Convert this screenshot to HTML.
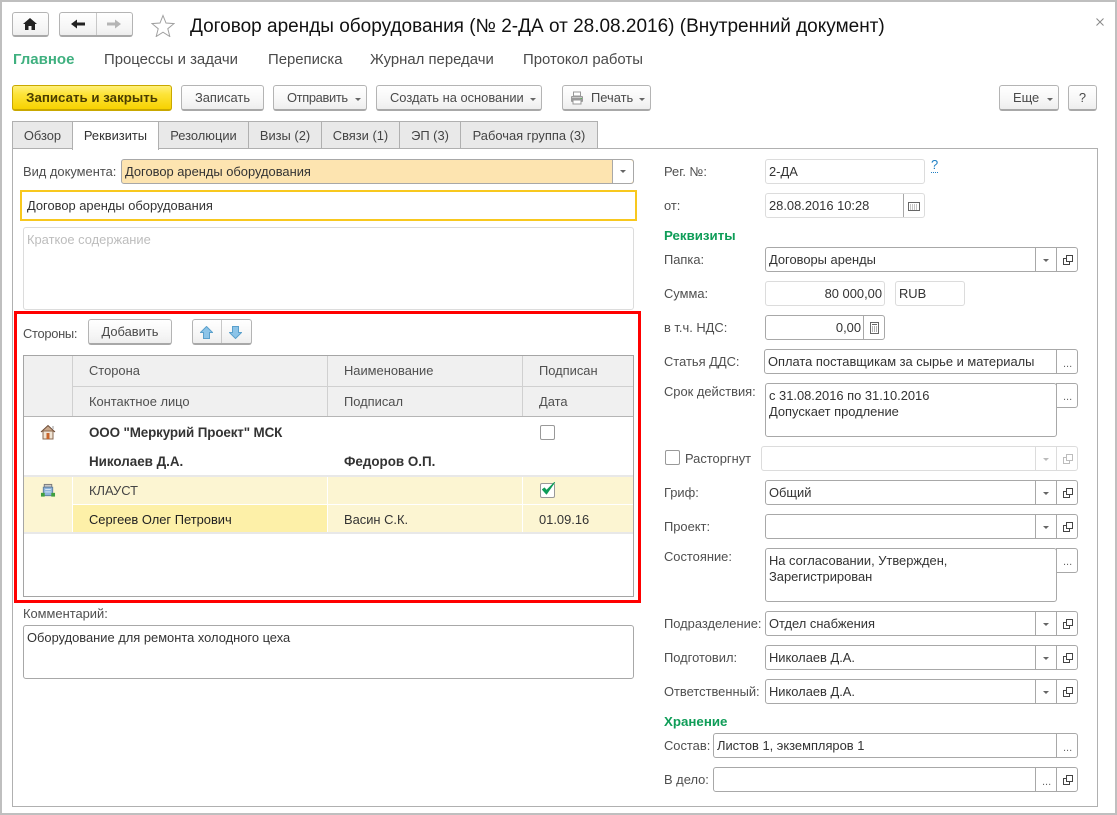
<!DOCTYPE html>
<html lang="ru"><head><meta charset="utf-8"><title>Договор аренды оборудования</title>
<style>
html,body{margin:0;padding:0;background:#fff}
#p{position:relative;width:1117px;height:815px;overflow:hidden;background:#fff;font:12.9px/16px "Liberation Sans",Arial,sans-serif;color:#333}
#p div,#p svg{position:absolute;box-sizing:border-box}
.t{white-space:nowrap;height:16px;margin-top:1px}
.l{color:#4f4f4f}
.g{color:#0f9d58;font-weight:bold;font-size:13.3px}
.bd{font-weight:bold;font-size:13.4px}
.d{font-size:11px;color:#666}
.m{font-size:14.9px;color:#4a4a4a;height:18px;line-height:18px}
.b{border:1px solid #b4b4b4;border-bottom:2px solid #a8a8a8;border-radius:3px;background:linear-gradient(#fff,#f5f5f5 70%,#eee);text-align:center;line-height:23px;color:#4a4a4a;white-space:nowrap}
.tab{top:121px;height:28px;border:1px solid #b0b0b0;background:#e9e9e9;text-align:center;line-height:28px;color:#444;white-space:nowrap}
.f{border:1px solid #a8a8a8;border-radius:3px;background:#fff;height:25px;padding:0 3px;line-height:23px;white-space:nowrap;color:#333}
.li{border-color:#dcdcdc}
.h{background:#f0f0f0}
.ty{background:#fcf5d2}
.a{width:0;height:0;border-left:3px solid transparent;border-right:3px solid transparent;border-top:3px solid #666}
</style></head><body>
<div id="p">
<svg width="0" height="0" style="left:0;top:0"><defs>
<symbol id="open" viewBox="0 0 12 12"><path d="M4.500 1.500h6v6h-6zM4.500 4.500h-3v6h6v-3" fill="none" stroke="#444" stroke-width="1"/></symbol>
<symbol id="cal" viewBox="0 0 12 12"><rect x=".5" y="2.500" width="11" height="8" fill="#fff" stroke="#666"/><path d="M2 5h8M2 7h8M2 9h8" stroke="#888" stroke-width="1" stroke-dasharray="1 1"/></symbol>
</defs></svg>

<!-- window frame -->
<div style="left:0;top:0;width:1117px;height:815px;border:2px solid #bfbfbf"></div>

<!-- top nav -->
<div class="b" style="left:12px;top:12px;width:37px;height:25px"></div>
<svg style="left:23px;top:18px" width="14" height="12" viewBox="0 0 14 12"><path d="M7 0 0 6h2v6h3.500V8h3v4H12V6h2z" fill="#222"/></svg>
<div class="b" style="left:59px;top:12px;width:74px;height:25px"></div>
<div style="left:96px;top:13px;width:1px;height:22px;background:#c8c8c8"></div>
<svg style="left:70px;top:18px" width="16" height="12" viewBox="0 0 16 12"><path d="M1 6 7 1.500v3h8v3H7v3z" fill="#222"/></svg>
<svg style="left:106px;top:18px" width="16" height="12" viewBox="0 0 16 12"><path d="M15 6 9 1.500v3H1v3h8v3z" fill="#b5b5b5"/></svg>
<svg style="left:151px;top:14px" width="24" height="23" viewBox="0 0 24 23"><path d="M12 1.500l3 7.500 8 .6-6.200 5.100 2 7.800L12 18.200 5.200 22.500l2-7.800L1 9.600l8-.6z" fill="#fff" stroke="#a0a0a0" stroke-width="1"/></svg>
<div class="t" style="left:190px;top:15px;height:22px;line-height:22px;font-size:19px;color:#111">Договор аренды оборудования (№ 2-ДА от 28.08.2016) (Внутренний документ)</div>
<svg style="left:1096px;top:18px" width="8" height="8" viewBox="0 0 8 8"><path d="M.5.5l7 7M7.500.5l-7 7" stroke="#888" stroke-width="1"/></svg>

<!-- section menu -->
<div class="t m" style="left:13px;top:50px;font-weight:bold;color:#3fb07f;font-size:15px">Главное</div>
<div class="t m" style="left:104px;top:50px">Процессы и задачи</div>
<div class="t m" style="left:268px;top:50px">Переписка</div>
<div class="t m" style="left:370px;top:50px">Журнал передачи</div>
<div class="t m" style="left:523px;top:50px">Протокол работы</div>

<!-- command bar -->
<div class="b" style="left:12px;top:85px;width:160px;height:26px;background:linear-gradient(#fff07a,#fde43a 35%,#f7d200);border-color:#c9a800;color:#4a3d00;font-weight:bold;font-size:13.300px">Записать и закрыть</div>
<div class="b" style="left:181px;top:85px;width:83px;height:26px">Записать</div>
<div class="b" style="left:273px;top:85px;width:94px;height:26px;text-align:left;padding-left:13px;letter-spacing:-.35px">Отправить</div>
<div class="a" style="left:355px;top:98px"></div>
<div class="b" style="left:376px;top:85px;width:166px;height:26px;text-align:left;padding-left:13px">Создать на основании</div>
<div class="a" style="left:530px;top:98px"></div>
<div class="b" style="left:562px;top:85px;width:89px;height:26px;text-align:left;padding-left:28px">Печать</div>
<svg style="left:570px;top:91px" width="14" height="14" viewBox="0 0 14 14"><rect x="3.500" y="1" width="7" height="4" fill="#fff" stroke="#999"/><rect x="1" y="5" width="12" height="6" rx="1" fill="#9a9a9a"/><rect x="3" y="9" width="8" height="4" fill="#fff" stroke="#999"/><rect x="2" y="6" width="10" height="1" fill="#c8c8c8"/><rect x="10.500" y="7" width="1.500" height="1" fill="#5fb35f"/></svg>
<div class="a" style="left:639px;top:98px"></div>
<div class="b" style="left:999px;top:85px;width:60px;height:26px;text-align:left;padding-left:13px">Еще</div>
<div class="a" style="left:1047px;top:98px"></div>
<div class="b" style="left:1068px;top:85px;width:29px;height:26px">?</div>

<!-- panel and tabs -->
<div style="left:12px;top:148px;width:1086px;height:659px;border:1px solid #b0b0b0"></div>
<div class="tab" style="left:12px;width:61px">Обзор</div>
<div class="tab" style="left:158px;width:91px">Резолюции</div>
<div class="tab" style="left:248px;width:74px">Визы (2)</div>
<div class="tab" style="left:321px;width:79px">Связи (1)</div>
<div class="tab" style="left:399px;width:62px">ЭП (3)</div>
<div class="tab" style="left:460px;width:138px">Рабочая группа (3)</div>
<div class="tab" style="left:72px;width:87px;height:29px;background:#fff;border-bottom:0;color:#333">Реквизиты</div>

<!-- left top fields -->
<div class="t l" style="left:23px;top:163px">Вид документа:</div>
<div class="f" style="left:121px;top:159px;width:513px;background:#fde4b0">Договор аренды оборудования</div>
<div style="left:612px;top:160px;width:21px;height:23px;background:#fff;border-left:1px solid #a8a8a8;border-radius:0 3px 3px 0"></div>
<div class="a" style="left:620px;top:170px"></div>
<div class="f" style="left:20px;top:190px;width:617px;height:31px;border:2px solid #f8c81e;border-radius:0;padding-left:5px;line-height:27px">Договор аренды оборудования</div>
<div class="f li" style="left:23px;top:227px;width:611px;height:83px;color:#bdbdbd;line-height:23px">Краткое содержание</div>

<!-- red highlight -->
<div style="left:14px;top:311px;width:627px;height:292px;border:3px solid #f00;z-index:5"></div>
<div class="t l" style="left:23px;top:325px;letter-spacing:-.3px">Стороны:</div>
<div class="b" style="left:88px;top:319px;width:84px;height:26px">Добавить</div>
<div class="b" style="left:192px;top:319px;width:60px;height:26px"></div>
<div style="left:221px;top:320px;width:1px;height:23px;background:#c8c8c8"></div>
<svg style="left:200px;top:326px" width="13" height="13" viewBox="0 0 13 13"><path d="M6.500.5 12.500 6.500H9.500V12.500H3.500V6.500H.5z" fill="#8cc4e8" stroke="#5aa0cc"/></svg>
<svg style="left:229px;top:326px" width="13" height="13" viewBox="0 0 13 13"><path d="M6.500 12.500 12.500 6.500H9.500V.5H3.500V6.500H.5z" fill="#8cc4e8" stroke="#5aa0cc"/></svg>

<!-- table -->
<div style="left:23px;top:355px;width:611px;height:242px;border:1px solid #a5a5a5;background:#fff"></div>
<div class="h" style="left:24px;top:356px;width:48px;height:60px"></div>
<div class="h" style="left:73px;top:356px;width:254px;height:30px"></div>
<div class="h" style="left:328px;top:356px;width:194px;height:30px"></div>
<div class="h" style="left:523px;top:356px;width:110px;height:30px"></div>
<div class="h" style="left:73px;top:387px;width:254px;height:29px"></div>
<div class="h" style="left:328px;top:387px;width:194px;height:29px"></div>
<div class="h" style="left:523px;top:387px;width:110px;height:29px"></div>
<div style="left:72px;top:356px;width:1px;height:60px;background:#d0d0d0"></div>
<div style="left:327px;top:356px;width:1px;height:60px;background:#d0d0d0"></div>
<div style="left:522px;top:356px;width:1px;height:60px;background:#d0d0d0"></div>
<div style="left:73px;top:386px;width:560px;height:1px;background:#d0d0d0"></div>
<div style="left:24px;top:416px;width:609px;height:1px;background:#b5b5b5"></div>
<div class="t l" style="left:89px;top:362px">Сторона</div>
<div class="t l" style="left:344px;top:362px">Наименование</div>
<div class="t l" style="left:539px;top:362px">Подписан</div>
<div class="t l" style="left:89px;top:393px">Контактное лицо</div>
<div class="t l" style="left:344px;top:393px">Подписал</div>
<div class="t l" style="left:539px;top:393px">Дата</div>

<svg style="left:40px;top:424px" width="16" height="16" viewBox="0 0 16 16"><path d="M1 8 8 1.500 15 8" fill="#c9a78a" stroke="#6b4a35"/><rect x="3" y="7" width="10" height="8" fill="#f0e4d4" stroke="#8a6a50"/><rect x="6.500" y="9" width="3" height="6" fill="#c8642a"/><rect x="12" y="2" width="2" height="3" fill="#ccc"/></svg>
<div class="t bd" style="left:89px;top:424px;letter-spacing:-.12px">ООО "Меркурий Проект" МСК</div>
<div style="left:540px;top:425px;width:15px;height:15px;border:1px solid #999;border-radius:2px;background:#fff"></div>
<div class="t bd" style="left:89px;top:453px">Николаев Д.А.</div>
<div class="t bd" style="left:344px;top:453px">Федоров О.П.</div>
<div style="left:24px;top:475px;width:609px;height:2px;background:#e8e8e8"></div>

<div class="ty" style="left:24px;top:477px;width:48px;height:55px"></div>
<div class="ty" style="left:73px;top:477px;width:254px;height:27px"></div>
<div class="ty" style="left:328px;top:477px;width:194px;height:27px"></div>
<div class="ty" style="left:523px;top:477px;width:110px;height:27px"></div>
<div style="left:73px;top:505px;width:254px;height:27px;background:#fdf0a8"></div>
<div class="ty" style="left:328px;top:505px;width:194px;height:27px"></div>
<div class="ty" style="left:523px;top:505px;width:110px;height:27px"></div>
<div style="left:24px;top:532px;width:609px;height:2px;background:#e8e8e8"></div>
<svg style="left:40px;top:483px" width="16" height="15" viewBox="0 0 16 16"><rect x="4" y="1.500" width="8" height="3" fill="#c8c8c8" stroke="#777"/><rect x="3" y="4.500" width="10" height="9" fill="#8fb4dc" stroke="#5f7f9f"/><path d="M5 7h6M5 9.500h6" stroke="#dceaf7"/><rect x="0.500" y="10.500" width="4" height="4" fill="#3f9f3f"/><rect x="11.500" y="10.500" width="4" height="4" fill="#3f9f3f"/></svg>
<div class="t" style="left:89px;top:482px;color:#444">КЛАУСТ</div>
<div style="left:540px;top:483px;width:15px;height:15px;border:1px solid #999;border-radius:2px;background:#fff"></div>
<svg style="left:540px;top:481px" width="17" height="16" viewBox="0 0 17 16"><path d="M2.500 8.500 6.500 13 14.500 1.500 6.500 9.500 4.500 7z" fill="#0f9d58" stroke="#0f9d58" stroke-linejoin="round"/></svg>
<div class="t" style="left:89px;top:511px;color:#222">Сергеев Олег Петрович</div>
<div class="t" style="left:344px;top:511px">Васин С.К.</div>
<div class="t" style="left:539px;top:511px">01.09.16</div>

<!-- comment -->
<div class="t l" style="left:23px;top:605px">Комментарий:</div>
<div class="f" style="left:23px;top:625px;width:611px;height:54px">Оборудование для ремонта холодного цеха</div>

<!-- right column -->
<div class="t l" style="left:664px;top:163px">Рег. №:</div>
<div class="f li" style="left:765px;top:159px;width:160px">2-ДА</div>
<div class="t" style="left:931px;top:157px;color:#1f7fc4;border-bottom:1px dotted #1f7fc4;height:15px;line-height:14px">?</div>

<div class="t l" style="left:664px;top:197px">от:</div>
<div class="f li" style="left:765px;top:193px;width:160px">28.08.2016 10:28</div>
<div style="left:903px;top:194px;width:1px;height:23px;background:#a8a8a8"></div>
<svg style="left:908px;top:200px" width="12" height="12"><use href="#cal"/></svg>

<div class="t g" style="left:664px;top:227px">Реквизиты</div>

<div class="t l" style="left:664px;top:251px">Папка:</div>
<div class="f" style="left:765px;top:247px;width:313px">Договоры аренды</div>
<div style="left:1035px;top:248px;width:1px;height:23px;background:#a8a8a8"></div>
<div style="left:1056px;top:248px;width:1px;height:23px;background:#a8a8a8"></div>
<div class="a" style="left:1043px;top:259px"></div>
<svg style="left:1062px;top:254px" width="12" height="12"><use href="#open"/></svg>

<div class="t l" style="left:664px;top:285px">Сумма:</div>
<div class="f li" style="left:765px;top:281px;width:120px;text-align:right;padding-right:2px">80 000,00</div>
<div class="f li" style="left:895px;top:281px;width:70px">RUB</div>

<div class="t l" style="left:664px;top:319px">в т.ч. НДС:</div>
<div class="f" style="left:765px;top:315px;width:120px;text-align:right;padding-right:23px">0,00</div>
<div style="left:863px;top:316px;width:1px;height:23px;background:#a8a8a8"></div>
<svg style="left:869px;top:322px" width="11" height="12" viewBox="0 0 11 12"><rect x="1.500" y=".5" width="8" height="11" fill="#fff" stroke="#666"/><path d="M3 2.500h5" stroke="#666"/><path d="M3 5h5M3 7h5M3 9h5" stroke="#666" stroke-dasharray="1 1"/></svg>

<div class="t l" style="left:664px;top:353px">Статья ДДС:</div>
<div class="f" style="left:764px;top:349px;width:314px">Оплата поставщикам за сырье и материалы</div>
<div style="left:1056px;top:350px;width:1px;height:23px;background:#a8a8a8"></div>
<div class="t d" style="left:1063px;top:355px">...</div>

<div class="t l" style="left:664px;top:383px">Срок действия:</div>
<div class="f" style="left:765px;top:383px;width:292px;height:54px;line-height:16px;padding-top:4px">с 31.08.2016 по 31.10.2016<br>Допускает продление</div>
<div class="f d" style="left:1056px;top:383px;width:22px;border-radius:0 3px 3px 0;padding:2px 0 0 6px;color:#666">...</div>

<div style="left:665px;top:450px;width:15px;height:15px;border:1px solid #999;border-radius:2px"></div>
<div class="t l" style="left:685px;top:450px">Расторгнут</div>
<div class="f li" style="left:761px;top:446px;width:317px"></div>
<div style="left:1035px;top:447px;width:1px;height:23px;background:#dcdcdc"></div>
<div style="left:1056px;top:447px;width:1px;height:23px;background:#dcdcdc"></div>
<div class="a" style="left:1043px;top:458px;border-top-color:#bbb"></div>
<svg style="left:1062px;top:453px;opacity:.35" width="12" height="12"><use href="#open"/></svg>

<div class="t l" style="left:664px;top:484px">Гриф:</div>
<div class="f" style="left:765px;top:480px;width:313px">Общий</div>
<div style="left:1035px;top:481px;width:1px;height:23px;background:#a8a8a8"></div>
<div style="left:1056px;top:481px;width:1px;height:23px;background:#a8a8a8"></div>
<div class="a" style="left:1043px;top:492px"></div>
<svg style="left:1062px;top:487px" width="12" height="12"><use href="#open"/></svg>

<div class="t l" style="left:664px;top:518px">Проект:</div>
<div class="f" style="left:765px;top:514px;width:313px"></div>
<div style="left:1035px;top:515px;width:1px;height:23px;background:#a8a8a8"></div>
<div style="left:1056px;top:515px;width:1px;height:23px;background:#a8a8a8"></div>
<div class="a" style="left:1043px;top:526px"></div>
<svg style="left:1062px;top:521px" width="12" height="12"><use href="#open"/></svg>

<div class="t l" style="left:664px;top:548px">Состояние:</div>
<div class="f" style="left:765px;top:548px;width:292px;height:54px;line-height:16px;padding-top:4px">На согласовании, Утвержден,<br>Зарегистрирован</div>
<div class="f d" style="left:1056px;top:548px;width:22px;border-radius:0 3px 3px 0;padding:2px 0 0 6px;color:#666">...</div>

<div class="t l" style="left:664px;top:615px">Подразделение:</div>
<div class="f" style="left:765px;top:611px;width:313px">Отдел снабжения</div>
<div style="left:1035px;top:612px;width:1px;height:23px;background:#a8a8a8"></div>
<div style="left:1056px;top:612px;width:1px;height:23px;background:#a8a8a8"></div>
<div class="a" style="left:1043px;top:623px"></div>
<svg style="left:1062px;top:618px" width="12" height="12"><use href="#open"/></svg>

<div class="t l" style="left:664px;top:649px">Подготовил:</div>
<div class="f" style="left:765px;top:645px;width:313px">Николаев Д.А.</div>
<div style="left:1035px;top:646px;width:1px;height:23px;background:#a8a8a8"></div>
<div style="left:1056px;top:646px;width:1px;height:23px;background:#a8a8a8"></div>
<div class="a" style="left:1043px;top:657px"></div>
<svg style="left:1062px;top:652px" width="12" height="12"><use href="#open"/></svg>

<div class="t l" style="left:664px;top:683px">Ответственный:</div>
<div class="f" style="left:765px;top:679px;width:313px">Николаев Д.А.</div>
<div style="left:1035px;top:680px;width:1px;height:23px;background:#a8a8a8"></div>
<div style="left:1056px;top:680px;width:1px;height:23px;background:#a8a8a8"></div>
<div class="a" style="left:1043px;top:691px"></div>
<svg style="left:1062px;top:686px" width="12" height="12"><use href="#open"/></svg>

<div class="t g" style="left:664px;top:713px">Хранение</div>

<div class="t l" style="left:664px;top:737px">Состав:</div>
<div class="f" style="left:713px;top:733px;width:365px">Листов 1, экземпляров 1</div>
<div style="left:1056px;top:734px;width:1px;height:23px;background:#a8a8a8"></div>
<div class="t d" style="left:1063px;top:739px">...</div>

<div class="t l" style="left:664px;top:771px">В дело:</div>
<div class="f" style="left:713px;top:767px;width:365px"></div>
<div style="left:1035px;top:768px;width:1px;height:23px;background:#a8a8a8"></div>
<div style="left:1056px;top:768px;width:1px;height:23px;background:#a8a8a8"></div>
<div class="t d" style="left:1042px;top:773px">...</div>
<svg style="left:1062px;top:774px" width="12" height="12"><use href="#open"/></svg>
</div>
</body></html>
